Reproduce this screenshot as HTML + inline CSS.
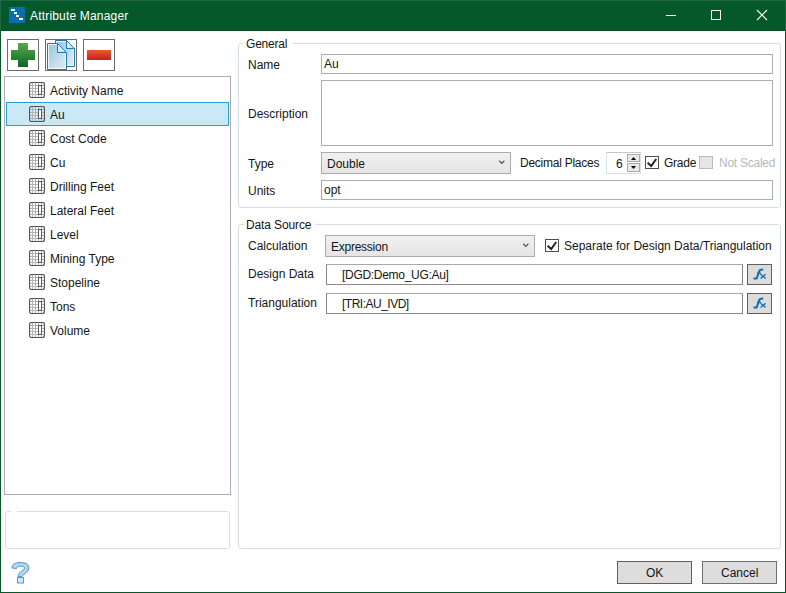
<!DOCTYPE html>
<html>
<head>
<meta charset="utf-8">
<style>
html,body{margin:0;padding:0;}
body{width:786px;height:593px;position:relative;overflow:hidden;background:#fff;font-family:"Liberation Sans",sans-serif;font-size:12px;color:#161616;}
.a{position:absolute;}
.t{position:absolute;white-space:nowrap;line-height:14px;font-size:12px;}
.box{position:absolute;box-sizing:border-box;}
.tb{position:absolute;box-sizing:border-box;border:1px solid #abadb3;background:#fff;}
.grp{position:absolute;box-sizing:border-box;border:1px solid #d5dfe5;border-radius:3px;}
.gap{position:absolute;background:#fff;height:3px;}
.cb{position:absolute;box-sizing:border-box;border:1px solid #acacac;background:linear-gradient(#f0f0f0,#e5e5e5);}
.item{position:absolute;left:29px;width:16px;height:16px;}
.lbl{position:absolute;left:50px;}
</style>
</head>
<body>
<!-- window frame -->
<div class="a" style="left:0;top:0;width:786px;height:31px;background:#04582a;"></div>
<div class="a" style="left:0;top:0;width:1px;height:593px;background:#04582a;"></div>
<div class="a" style="left:785px;top:0;width:1px;height:593px;background:#04582a;"></div>
<div class="a" style="left:0;top:592px;width:786px;height:1px;background:#04582a;"></div>
<div class="a" style="left:0;top:0;width:786px;height:1px;background:#1f6742;"></div>
<div class="a" style="left:0;top:0;width:1px;height:31px;background:#1f6742;"></div>
<div class="a" style="left:785px;top:0;width:1px;height:31px;background:#1f6742;"></div>
<div class="a" style="left:1px;top:30px;width:784px;height:1px;background:#034e25;"></div>

<!-- app icon -->
<svg class="a" style="left:9px;top:7px" width="16" height="16" viewBox="0 0 16 16">
<rect width="16" height="16" fill="#0a6eae"/>
<rect x="2" y="2" width="4" height="2" fill="#fff"/>
<rect x="5" y="5" width="3" height="2" fill="#fff"/>
<rect x="7" y="8" width="3" height="2" fill="#fff"/>
<rect x="10" y="11" width="4" height="2" fill="#fff"/>
</svg>
<div class="t" style="left:30px;top:9px;color:#fff;letter-spacing:0.18px;">Attribute Manager</div>

<!-- caption buttons -->
<div class="a" style="left:666px;top:15px;width:10px;height:1px;background:#fff;"></div>
<div class="box" style="left:711px;top:10px;width:10px;height:10px;border:1px solid #fff;"></div>
<svg class="a" style="left:756px;top:9px" width="12" height="12" viewBox="0 0 12 12">
<path d="M1 1 L11 11 M11 1 L1 11" stroke="#fff" stroke-width="1.1" fill="none"/>
</svg>

<!-- toolbar buttons -->
<div class="box" style="left:7px;top:39px;width:32px;height:32px;border:1px solid #6b6b6b;"></div>
<svg class="a" style="left:7px;top:39px" width="32" height="32" viewBox="0 0 32 32">
<defs><linearGradient id="gp" x1="0" y1="0" x2="0" y2="1"><stop offset="0" stop-color="#5aa94c"/><stop offset="0.5" stop-color="#2f8a37"/><stop offset="1" stop-color="#0f6428"/></linearGradient></defs>
<path d="M11 4 H21 V11 H28 V21 H21 V28 H11 V21 H4 V11 H11 Z" fill="url(#gp)"/>
</svg>

<div class="box" style="left:45px;top:39px;width:32px;height:32px;border:1px solid #6b6b6b;"></div>
<svg class="a" style="left:45px;top:39px" width="32" height="32" viewBox="0 0 32 32">
<defs><linearGradient id="gd" x1="0" y1="0" x2="1" y2="1"><stop offset="0" stop-color="#9cc4da"/><stop offset="1" stop-color="#e2eff6"/></linearGradient>
<linearGradient id="gf" x1="0" y1="0" x2="1" y2="1"><stop offset="0" stop-color="#f4f9fc"/><stop offset="1" stop-color="#bcd8e8"/></linearGradient></defs>
<path d="M10.5 1.5 H21.5 L29.5 9.5 V27.5 H10.5 Z" fill="url(#gd)" stroke="#1f7ab5" stroke-width="1"/>
<path d="M11.5 2.5 H21 L28.5 10 V26.5 H11.5 Z" fill="none" stroke="#fff" stroke-width="1" opacity="0.8"/>
<path d="M21.5 1.5 V9.5 H29.5 Z" fill="url(#gf)" stroke="#1f7ab5" stroke-width="1" stroke-linejoin="round"/>
<path d="M2.5 4.5 H12.5 L21.5 13.5 V30.5 H2.5 Z" fill="url(#gd)" stroke="#1f7ab5" stroke-width="1"/>
<path d="M3.5 5.5 H12 L20.5 14 V29.5 H3.5 Z" fill="none" stroke="#fff" stroke-width="1" opacity="0.8"/>
<path d="M12.5 4.5 V13.5 H21.5 Z" fill="url(#gf)" stroke="#1f7ab5" stroke-width="1" stroke-linejoin="round"/>
</svg>

<div class="box" style="left:83px;top:39px;width:32px;height:32px;border:1px solid #6b6b6b;"></div>
<svg class="a" style="left:83px;top:39px" width="32" height="32" viewBox="0 0 32 32">
<defs><linearGradient id="gm" x1="0" y1="0" x2="0" y2="1"><stop offset="0" stop-color="#ec5a2a"/><stop offset="1" stop-color="#c41f1e"/></linearGradient></defs>
<rect x="4" y="11" width="24" height="10" fill="url(#gm)"/>
</svg>

<!-- list box -->
<div class="tb" style="left:4px;top:76px;width:227px;height:419px;"></div>
<div class="box" style="left:6px;top:102px;width:223px;height:24px;border:1px solid #26a0da;background:#cbe8f6;"></div>

<svg class="item" style="top:82px" width="16" height="16" viewBox="0 0 16 16"><g stroke="#b4b4b4" stroke-width="1"><path d="M3.5 1V15M6.5 1V15M9.5 1V15M12.5 1V15M1 3.5H15M1 6.5H15M1 9.5H15M1 12.5H15"/></g><rect x="0.5" y="0.5" width="15" height="15" rx="2" fill="none" stroke="#555" stroke-width="1.2"/><rect x="9.5" y="3.5" width="3" height="9" fill="#fff" stroke="#5a5a5a"/></svg>
<div class="t lbl" style="top:84px;">Activity Name</div>
<svg class="item" style="top:106px" width="16" height="16" viewBox="0 0 16 16"><g stroke="#b4b4b4" stroke-width="1"><path d="M3.5 1V15M6.5 1V15M9.5 1V15M12.5 1V15M1 3.5H15M1 6.5H15M1 9.5H15M1 12.5H15"/></g><rect x="0.5" y="0.5" width="15" height="15" rx="2" fill="none" stroke="#555" stroke-width="1.2"/><rect x="9.5" y="3.5" width="3" height="9" fill="#fff" stroke="#5a5a5a"/></svg>
<div class="t lbl" style="top:108px;">Au</div>
<svg class="item" style="top:130px" width="16" height="16" viewBox="0 0 16 16"><g stroke="#b4b4b4" stroke-width="1"><path d="M3.5 1V15M6.5 1V15M9.5 1V15M12.5 1V15M1 3.5H15M1 6.5H15M1 9.5H15M1 12.5H15"/></g><rect x="0.5" y="0.5" width="15" height="15" rx="2" fill="none" stroke="#555" stroke-width="1.2"/><rect x="9.5" y="3.5" width="3" height="9" fill="#fff" stroke="#5a5a5a"/></svg>
<div class="t lbl" style="top:132px;">Cost Code</div>
<svg class="item" style="top:154px" width="16" height="16" viewBox="0 0 16 16"><g stroke="#b4b4b4" stroke-width="1"><path d="M3.5 1V15M6.5 1V15M9.5 1V15M12.5 1V15M1 3.5H15M1 6.5H15M1 9.5H15M1 12.5H15"/></g><rect x="0.5" y="0.5" width="15" height="15" rx="2" fill="none" stroke="#555" stroke-width="1.2"/><rect x="9.5" y="3.5" width="3" height="9" fill="#fff" stroke="#5a5a5a"/></svg>
<div class="t lbl" style="top:156px;">Cu</div>
<svg class="item" style="top:178px" width="16" height="16" viewBox="0 0 16 16"><g stroke="#b4b4b4" stroke-width="1"><path d="M3.5 1V15M6.5 1V15M9.5 1V15M12.5 1V15M1 3.5H15M1 6.5H15M1 9.5H15M1 12.5H15"/></g><rect x="0.5" y="0.5" width="15" height="15" rx="2" fill="none" stroke="#555" stroke-width="1.2"/><rect x="9.5" y="3.5" width="3" height="9" fill="#fff" stroke="#5a5a5a"/></svg>
<div class="t lbl" style="top:180px;">Drilling Feet</div>
<svg class="item" style="top:202px" width="16" height="16" viewBox="0 0 16 16"><g stroke="#b4b4b4" stroke-width="1"><path d="M3.5 1V15M6.5 1V15M9.5 1V15M12.5 1V15M1 3.5H15M1 6.5H15M1 9.5H15M1 12.5H15"/></g><rect x="0.5" y="0.5" width="15" height="15" rx="2" fill="none" stroke="#555" stroke-width="1.2"/><rect x="9.5" y="3.5" width="3" height="9" fill="#fff" stroke="#5a5a5a"/></svg>
<div class="t lbl" style="top:204px;">Lateral Feet</div>
<svg class="item" style="top:226px" width="16" height="16" viewBox="0 0 16 16"><g stroke="#b4b4b4" stroke-width="1"><path d="M3.5 1V15M6.5 1V15M9.5 1V15M12.5 1V15M1 3.5H15M1 6.5H15M1 9.5H15M1 12.5H15"/></g><rect x="0.5" y="0.5" width="15" height="15" rx="2" fill="none" stroke="#555" stroke-width="1.2"/><rect x="9.5" y="3.5" width="3" height="9" fill="#fff" stroke="#5a5a5a"/></svg>
<div class="t lbl" style="top:228px;">Level</div>
<svg class="item" style="top:250px" width="16" height="16" viewBox="0 0 16 16"><g stroke="#b4b4b4" stroke-width="1"><path d="M3.5 1V15M6.5 1V15M9.5 1V15M12.5 1V15M1 3.5H15M1 6.5H15M1 9.5H15M1 12.5H15"/></g><rect x="0.5" y="0.5" width="15" height="15" rx="2" fill="none" stroke="#555" stroke-width="1.2"/><rect x="9.5" y="3.5" width="3" height="9" fill="#fff" stroke="#5a5a5a"/></svg>
<div class="t lbl" style="top:252px;">Mining Type</div>
<svg class="item" style="top:274px" width="16" height="16" viewBox="0 0 16 16"><g stroke="#b4b4b4" stroke-width="1"><path d="M3.5 1V15M6.5 1V15M9.5 1V15M12.5 1V15M1 3.5H15M1 6.5H15M1 9.5H15M1 12.5H15"/></g><rect x="0.5" y="0.5" width="15" height="15" rx="2" fill="none" stroke="#555" stroke-width="1.2"/><rect x="9.5" y="3.5" width="3" height="9" fill="#fff" stroke="#5a5a5a"/></svg>
<div class="t lbl" style="top:276px;">Stopeline</div>
<svg class="item" style="top:298px" width="16" height="16" viewBox="0 0 16 16"><g stroke="#b4b4b4" stroke-width="1"><path d="M3.5 1V15M6.5 1V15M9.5 1V15M12.5 1V15M1 3.5H15M1 6.5H15M1 9.5H15M1 12.5H15"/></g><rect x="0.5" y="0.5" width="15" height="15" rx="2" fill="none" stroke="#555" stroke-width="1.2"/><rect x="9.5" y="3.5" width="3" height="9" fill="#fff" stroke="#5a5a5a"/></svg>
<div class="t lbl" style="top:300px;">Tons</div>
<svg class="item" style="top:322px" width="16" height="16" viewBox="0 0 16 16"><g stroke="#b4b4b4" stroke-width="1"><path d="M3.5 1V15M6.5 1V15M9.5 1V15M12.5 1V15M1 3.5H15M1 6.5H15M1 9.5H15M1 12.5H15"/></g><rect x="0.5" y="0.5" width="15" height="15" rx="2" fill="none" stroke="#555" stroke-width="1.2"/><rect x="9.5" y="3.5" width="3" height="9" fill="#fff" stroke="#5a5a5a"/></svg>
<div class="t lbl" style="top:324px;">Volume</div>

<!-- lower-left group -->
<div class="grp" style="left:5px;top:511px;width:225px;height:38px;"></div>
<div class="gap" style="left:11px;top:510px;width:6px;"></div>

<!-- General group -->
<div class="grp" style="left:238px;top:43px;width:543px;height:165px;"></div>
<div class="gap" style="left:244px;top:42px;width:48px;"></div>
<div class="t" style="left:246px;top:37px;letter-spacing:-0.2px;">General</div>

<div class="t" style="left:248px;top:58px;">Name</div>
<div class="tb" style="left:321px;top:54px;width:452px;height:20px;"></div>
<div class="t" style="left:324px;top:57px;">Au</div>

<div class="t" style="left:248px;top:107px;">Description</div>
<div class="tb" style="left:321px;top:80px;width:452px;height:66px;"></div>

<div class="t" style="left:248px;top:157px;">Type</div>
<div class="cb" style="left:321px;top:152px;width:190px;height:22px;"></div>
<div class="t" style="left:327px;top:157px;">Double</div>
<svg class="a" style="left:498px;top:159px" width="8" height="7" viewBox="0 0 8 7"><path d="M1.2 1.8 L3.8 4.4 L6.4 1.8" stroke="#555" fill="none" stroke-width="1.3"/></svg>

<div class="t" style="left:520px;top:156px;letter-spacing:-0.25px;">Decimal Places</div>
<div class="box" style="left:606px;top:152px;width:35px;height:22px;border:1px solid #d9e0e8;border-top-color:#c3c8cf;background:#fff;"></div>
<div class="t" style="left:616px;top:157px;">6</div>
<div class="box" style="left:627px;top:154px;width:13px;height:8px;border:1px solid #acacac;background:#e9e9e9;"></div>
<div class="box" style="left:627px;top:163px;width:13px;height:9px;border:1px solid #acacac;background:#e9e9e9;"></div>
<svg class="a" style="left:627px;top:154px" width="13" height="18" viewBox="0 0 13 18">
<path d="M4 6 L6.5 3 L9 6 Z" fill="#000"/>
<path d="M4 12 L9 12 L6.5 15 Z" fill="#000"/>
</svg>

<div class="box" style="left:645px;top:156px;width:14px;height:13px;border:1px solid #4d4d4d;background:#fff;"></div>
<svg class="a" style="left:645px;top:156px" width="14" height="13" viewBox="0 0 14 13"><path d="M2.6 6.8 L6.2 10 L11.2 3" stroke="#212121" stroke-width="2" fill="none"/></svg>
<div class="t" style="left:664px;top:156px;letter-spacing:-0.25px;">Grade</div>

<div class="box" style="left:699px;top:156px;width:14px;height:13px;border:1px solid #bcbcbc;background:#e6e6e6;"></div>
<div class="t" style="left:719px;top:156px;color:#b8b8b8;letter-spacing:-0.25px;">Not Scaled</div>

<div class="t" style="left:248px;top:184px;">Units</div>
<div class="tb" style="left:321px;top:180px;width:452px;height:20px;"></div>
<div class="t" style="left:324px;top:183px;">opt</div>

<!-- Data Source group -->
<div class="grp" style="left:238px;top:224px;width:543px;height:325px;"></div>
<div class="gap" style="left:244px;top:223px;width:71px;"></div>
<div class="t" style="left:246px;top:218px;letter-spacing:-0.12px;">Data Source</div>

<div class="t" style="left:248px;top:239px;">Calculation</div>
<div class="cb" style="left:325px;top:235px;width:210px;height:22px;"></div>
<div class="t" style="left:331px;top:240px;letter-spacing:-0.25px;">Expression</div>
<svg class="a" style="left:522px;top:242px" width="8" height="7" viewBox="0 0 8 7"><path d="M1.2 1.8 L3.8 4.4 L6.4 1.8" stroke="#555" fill="none" stroke-width="1.3"/></svg>

<div class="box" style="left:545px;top:239px;width:14px;height:13px;border:1px solid #4d4d4d;background:#fff;"></div>
<svg class="a" style="left:545px;top:239px" width="14" height="13" viewBox="0 0 14 13"><path d="M2.6 6.8 L6.2 10 L11.2 3" stroke="#212121" stroke-width="2" fill="none"/></svg>
<div class="t" style="left:564px;top:239px;">Separate for Design Data/Triangulation</div>

<div class="t" style="left:248px;top:267px;">Design Data</div>
<div class="tb" style="left:326px;top:264px;width:417px;height:21px;border-color:#a9a9a9 #858585 #8c8c8c #858585;"></div>
<div class="t" style="left:342px;top:268px;letter-spacing:-0.3px;">[DGD:Demo_UG:Au]</div>
<div class="box" style="left:747px;top:264px;width:25px;height:21px;border:1px solid #5f5f5f;background:#dcdcdc;"></div>
<svg class="a" style="left:747px;top:264px" width="25" height="21" viewBox="0 0 25 21">
<path d="M6.5 14.5 H9.6 L12.2 7.2 Q12.8 5.6 16.2 5.6" stroke="#0f6fb0" stroke-width="2" fill="none"/>
<path d="M10.2 9.3 H14" stroke="#0f6fb0" stroke-width="1.4" fill="none"/>
<path d="M13.6 10.3 L18.6 14.6 M18.6 10.3 L13.6 14.6" stroke="#0f6fb0" stroke-width="1.3" fill="none"/>
</svg>

<div class="t" style="left:248px;top:296px;">Triangulation</div>
<div class="tb" style="left:326px;top:293px;width:417px;height:21px;border-color:#a9a9a9 #858585 #8c8c8c #858585;"></div>
<div class="t" style="left:342px;top:297px;letter-spacing:-0.5px;">[TRI:AU_IVD]</div>
<div class="box" style="left:747px;top:293px;width:25px;height:21px;border:1px solid #5f5f5f;background:#dcdcdc;"></div>
<svg class="a" style="left:747px;top:293px" width="25" height="21" viewBox="0 0 25 21">
<path d="M6.5 14.5 H9.6 L12.2 7.2 Q12.8 5.6 16.2 5.6" stroke="#0f6fb0" stroke-width="2" fill="none"/>
<path d="M10.2 9.3 H14" stroke="#0f6fb0" stroke-width="1.4" fill="none"/>
<path d="M13.6 10.3 L18.6 14.6 M18.6 10.3 L13.6 14.6" stroke="#0f6fb0" stroke-width="1.3" fill="none"/>
</svg>

<!-- help icon -->
<svg class="a" style="left:10px;top:561px" width="22" height="24" viewBox="0 0 22 24">
<path d="M2 7 Q2 1.5 10 1.5 Q19 1.5 19 7 Q19 10 15 12.5 Q12 14.5 12 15.5 H8 Q8 12 12 10 Q14.5 8.5 14.5 7 Q14.5 5 10.5 5 Q6.5 5 6.5 7.5 Z" fill="#b3d6ea" stroke="#4f9cc8" stroke-width="1"/>
<rect x="7.5" y="16.5" width="6" height="5.5" fill="#d3e8f3" stroke="#4f9cc8" stroke-width="1"/>
</svg>

<!-- OK / Cancel -->
<div class="box" style="left:617px;top:561px;width:75px;height:23px;border:1px solid #0078d7;background:#dddddd;"></div>
<div class="t" style="left:646px;top:566px;">OK</div>
<div class="box" style="left:702px;top:561px;width:75px;height:23px;border:1px solid #707070;background:#dddddd;"></div>
<div class="t" style="left:721px;top:566px;">Cancel</div>

</body>
</html>
